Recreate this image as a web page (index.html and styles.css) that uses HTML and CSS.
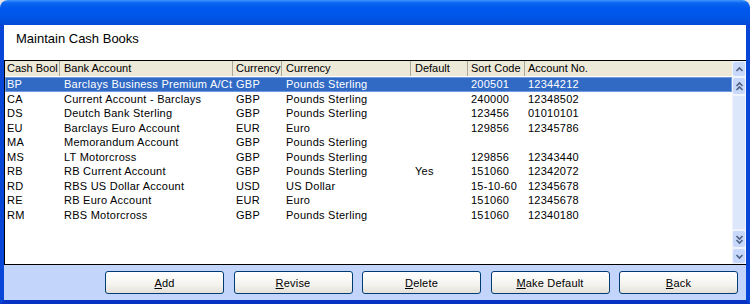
FILE: index.html
```html
<!DOCTYPE html>
<html>
<head lang="en">
    <meta charset="UTF-8">
    <title>Maintain Cash Books</title>
    <link rel="stylesheet" href="styles.css">
</head>
<body>
<!--window-->
<div class="window">
    <div class="titlebar"></div>
    <div class="client">
        <div class="caption">Maintain Cash Books</div>
        <!--grid + scrollbar-->
        <div class="grid_box">
            <div class="grid">
                <div class="row head">
                    <div>Cash Bool</div><div>Bank Account</div><div>Currency</div><div>Currency</div><div>Default</div><div>Sort Code</div><div>Account No.</div>
                </div>
                <div class="row sel">
                    <div>BP</div><div>Barclays Business Premium A/Ct</div><div>GBP</div><div>Pounds Sterling</div><div></div><div>200501</div><div>12344212</div>
                </div>
                <div class="row">
                    <div>CA</div><div>Current Account - Barclays</div><div>GBP</div><div>Pounds Sterling</div><div></div><div>240000</div><div>12348502</div>
                </div>
                <div class="row">
                    <div>DS</div><div>Deutch Bank Sterling</div><div>GBP</div><div>Pounds Sterling</div><div></div><div>123456</div><div>01010101</div>
                </div>
                <div class="row">
                    <div>EU</div><div>Barclays Euro Account</div><div>EUR</div><div>Euro</div><div></div><div>129856</div><div>12345786</div>
                </div>
                <div class="row">
                    <div>MA</div><div>Memorandum Account</div><div>GBP</div><div>Pounds Sterling</div><div></div><div></div><div></div>
                </div>
                <div class="row">
                    <div>MS</div><div>LT Motorcross</div><div>GBP</div><div>Pounds Sterling</div><div></div><div>129856</div><div>12343440</div>
                </div>
                <div class="row">
                    <div>RB</div><div>RB Current Account</div><div>GBP</div><div>Pounds Sterling</div><div>Yes</div><div>151060</div><div>12342072</div>
                </div>
                <div class="row">
                    <div>RD</div><div>RBS US Dollar Account</div><div>USD</div><div>US Dollar</div><div></div><div>15-10-60</div><div>12345678</div>
                </div>
                <div class="row">
                    <div>RE</div><div>RB Euro Account</div><div>EUR</div><div>Euro</div><div></div><div>151060</div><div>12345678</div>
                </div>
                <div class="row">
                    <div>RM</div><div>RBS Motorcross</div><div>GBP</div><div>Pounds Sterling</div><div></div><div>151060</div><div>12340180</div>
                </div>
            </div>
            <div class="scroll">
                <div class="sbtn"><svg width="11" height="13" viewBox="0 0 11 13"><polyline points="2.5,8 5.5,5 8.5,8"/></svg></div>
                <div class="sbtn tall"><svg width="11" height="15" viewBox="0 0 11 15"><polyline points="2.5,7 5.5,4 8.5,7"/><polyline points="2.5,11 5.5,8 8.5,11"/></svg></div>
                <div class="track"></div>
                <div class="sbtn tall"><svg width="11" height="15" viewBox="0 0 11 15"><polyline points="2.5,4 5.5,7 8.5,4"/><polyline points="2.5,8 5.5,11 8.5,8"/></svg></div>
                <div class="sbtn"><svg width="11" height="13" viewBox="0 0 11 13"><polyline points="2.5,5 5.5,8 8.5,5"/></svg></div>
            </div>
        </div>
        <!--buttons-->
        <div class="bar">
            <button class="btn"><u>A</u>dd</button>
            <button class="btn"><u>R</u>evise</button>
            <button class="btn"><u>D</u>elete</button>
            <button class="btn"><u>M</u>ake Default</button>
            <button class="btn"><u>B</u>ack</button>
        </div>
    </div>
</div>
</body>
</html>
```
FILE: styles.css
```css
body {
    margin: 0;
    padding: 0;
    background-color: #e6e6e6;
    font-family: "Liberation Sans", Arial, sans-serif;
    font-size: 11px;
    color: #000;
}
.window {
    width: 750px;
    height: 304px;
    display: flex;
    flex-direction: column;
}
.titlebar {
    height: 25px;
    border-radius: 8px 8px 0 0;
    background: linear-gradient(#3d95ff 0px, #0a66f0 3px, #0058ee 8px, #0055e6 18px, #0549d6 25px);
}
.client {
    flex: 1;
    display: flex;
    flex-direction: column;
    border-left: 4px solid #0846d8;
    border-right: 4px solid #0846d8;
    border-bottom: 4px solid #0832c4;
    background-color: #fff;
}
.caption {
    height: 35px;
    line-height: 28px;
    padding-left: 12px;
    font-size: 13px;
}
.grid_box {
    height: 203px;
    display: flex;
    border-top: 1px solid #000;
    border-bottom: 1px solid #000;
    border-left: 1px solid #000;
}
.grid {
    flex: 1;
    overflow: hidden;
    letter-spacing: 0.25px;
}
.row {
    display: grid;
    grid-template-columns: 55px 173px 49px 129px 57px 57px 1fr;
    height: 14.5px;
    line-height: 14.5px;
    white-space: nowrap;
}
.row div {
    padding-left: 2px;
    overflow: hidden;
}
.row div:nth-child(2), .row div:nth-child(4), .row div:nth-child(5) {
    padding-left: 4px;
}
.row div:nth-child(3), .row div:nth-child(6), .row div:nth-child(7) {
    padding-left: 3px;
}
.head {
    height: 15px;
    line-height: 15px;
    background-color: #ece9d8;
    border-bottom: 1px solid #fff;
    letter-spacing: 0;
}
.head div {
    border-right: 1px solid #aca899;
}
.head div:last-child {
    border-right: none;
}
.sel {
    background-color: #316ac5;
    color: #fff;
    box-shadow: inset 0 0 0 1px #6f9ae0;
}
.scroll {
    width: 13px;
    display: flex;
    flex-direction: column;
    background-color: #eef3fd;
    padding-right: 1px;
}
.sbtn {
    height: 14px;
    margin: 1px 0 1px 1px;
    border-radius: 2px;
    background-color: #c8d8fb;
    display: flex;
    align-items: center;
    justify-content: center;
}
.sbtn.tall {
    height: 16px;
}
.sbtn svg polyline {
    fill: none;
    stroke: #4d6185;
    stroke-width: 1.6;
}
.track {
    flex: 1;
    margin: 1px 0 1px 1px;
    background-color: #dde7fc;
}
.bar {
    flex: 1;
    display: flex;
    justify-content: flex-end;
    align-items: center;
    gap: 9.5px;
    padding-right: 8px;
    background-color: #c3d5fb;
}
.btn {
    width: 119px;
    height: 23px;
    padding: 0;
    border: 1px solid #003c74;
    border-radius: 3px;
    background: linear-gradient(#ffffff, #f4f3ee 60%, #e3e1d8);
    font-family: "Liberation Sans", Arial, sans-serif;
    font-size: 11px;
    letter-spacing: 0.2px;
    color: #000;
}
```
